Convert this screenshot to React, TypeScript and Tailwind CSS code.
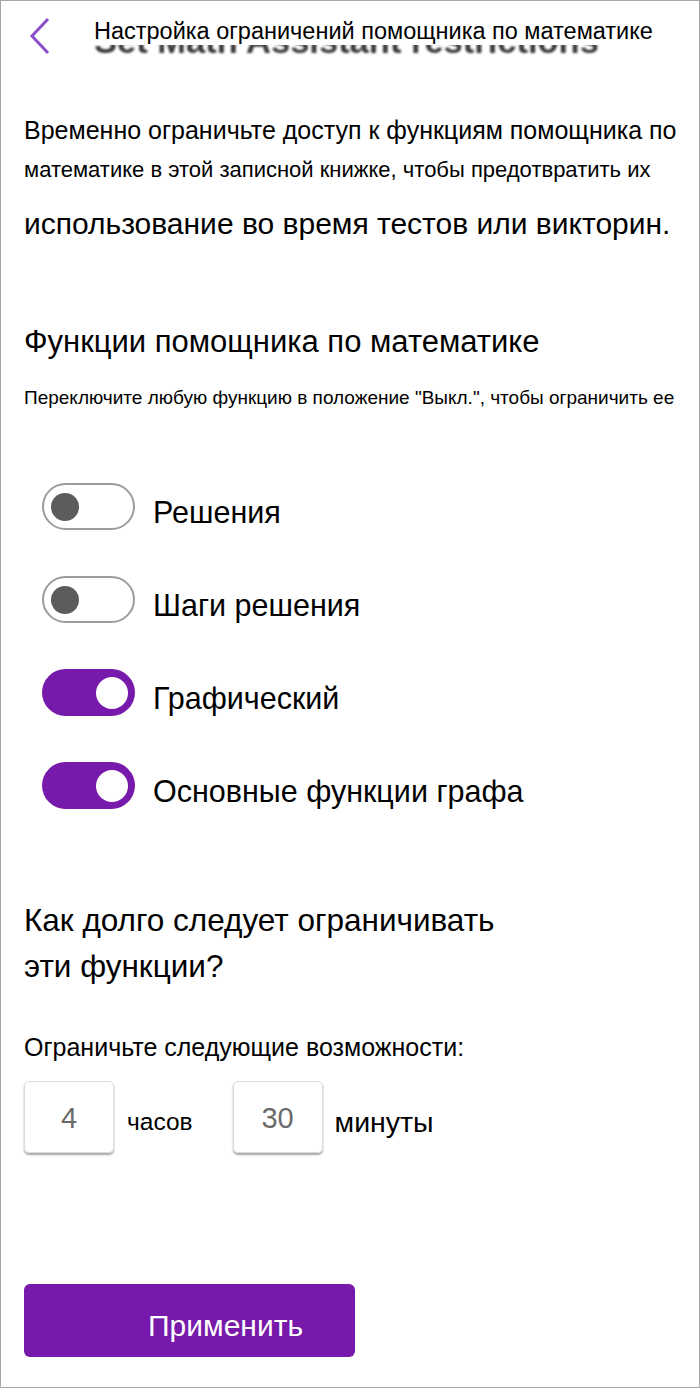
const features = [
  { name: 'Решения', on: false },
  { name: 'Шаги решения', on: false },
  { name: 'Графический', on: true },
  { name: 'Основные функции графа', on: true },
]

function Toggle({ on }: { on: boolean }) {
  return on ? (
    <div className="w-[93px] h-[47px] rounded-full bg-[#7719aa] flex items-center justify-end pr-[7px]">
      <div className="w-[32px] h-[32px] rounded-full bg-white" />
    </div>
  ) : (
    <div className="w-[93px] h-[47px] rounded-full border-2 border-[#9c9c9c] flex items-center pl-[7px]">
      <div className="w-[28px] h-[28px] rounded-full bg-[#5c5c5c]" />
    </div>
  )
}

function NumberBox({ value }: { value: string }) {
  return (
    <div className="w-[90px] h-[72px] rounded-[5px] border border-[#dcdcdc] shadow-[0_2px_2px_rgba(0,0,0,0.35)] flex items-center justify-center pt-[3px] text-[29px] leading-none text-[#6b6b6b]">
      {value}
    </div>
  )
}

export default function App() {
  return (
    <div className="w-[700px] h-[1388px] border border-[#a6a6a6] bg-white text-black font-['Liberation_Sans',Arial,sans-serif] pl-[23px]">
      {/* header */}
      <div className="relative h-[59px]">
        <svg className="absolute left-[5px] top-[16px]" width="22" height="38" viewBox="0 0 22 38">
          <polyline points="19,2 3,19 19,36" fill="none" stroke="#8b4fc9" strokeWidth="3" />
        </svg>
        <div className="absolute left-[70px] top-[23px] text-[34.5px] leading-none font-bold text-[#3a3a3a] blur-[1.3px] whitespace-nowrap">
          Set Math Assistant restrictions
        </div>
        <div className="absolute left-[70px] top-[19px] bg-white pb-[1px] text-[23.5px] leading-none whitespace-nowrap">
          Настройка ограничений помощника по математике
        </div>
      </div>

      <div className="mt-[58px] text-[25px] leading-none whitespace-nowrap">
        Временно ограничьте доступ к функциям помощника по
      </div>
      <div className="mt-[16px] text-[22px] leading-none whitespace-nowrap">
        математике в этой записной книжке, чтобы предотвратить их
      </div>
      <div className="mt-[28px] text-[30px] leading-none whitespace-nowrap">
        использование во время тестов или викторин.
      </div>

      <div className="mt-[87px] text-[31px] leading-none whitespace-nowrap">
        Функции помощника по математике
      </div>
      <div className="mt-[31px] text-[19px] leading-none whitespace-nowrap">
        Переключите любую функцию в положение "Выкл.", чтобы ограничить ее
      </div>

      <div className="mt-[76px] ml-[18px] flex flex-col gap-[46px]">
        {features.map((f) => (
          <div key={f.name} className="flex items-center gap-[18px]">
            <Toggle on={f.on} />
            <span className="pt-[12px] text-[30.5px] leading-none">{f.name}</span>
          </div>
        ))}
      </div>

      <div className="mt-[96px] text-[31.5px] leading-none whitespace-nowrap">
        Как долго следует ограничивать
      </div>
      <div className="mt-[14px] text-[31.5px] leading-none whitespace-nowrap">эти функции?</div>

      <div className="mt-[53px] text-[25px] leading-none whitespace-nowrap">
        Ограничьте следующие возможности:
      </div>

      <div className="mt-[21px] flex items-center">
        <NumberBox value="4" />
        <span className="ml-[13px] pt-[10px] text-[24.5px] leading-none">часов</span>
        <div className="ml-[40px]">
          <NumberBox value="30" />
        </div>
        <span className="ml-[12px] pt-[10px] text-[28.5px] leading-none">минуты</span>
      </div>

      <button className="mt-[131px] w-[331px] h-[73px] rounded-[6px] bg-[#7719aa] text-white text-[30px] leading-none flex items-center pl-[124px] pt-[10px]">
        Применить
      </button>
    </div>
  )
}
